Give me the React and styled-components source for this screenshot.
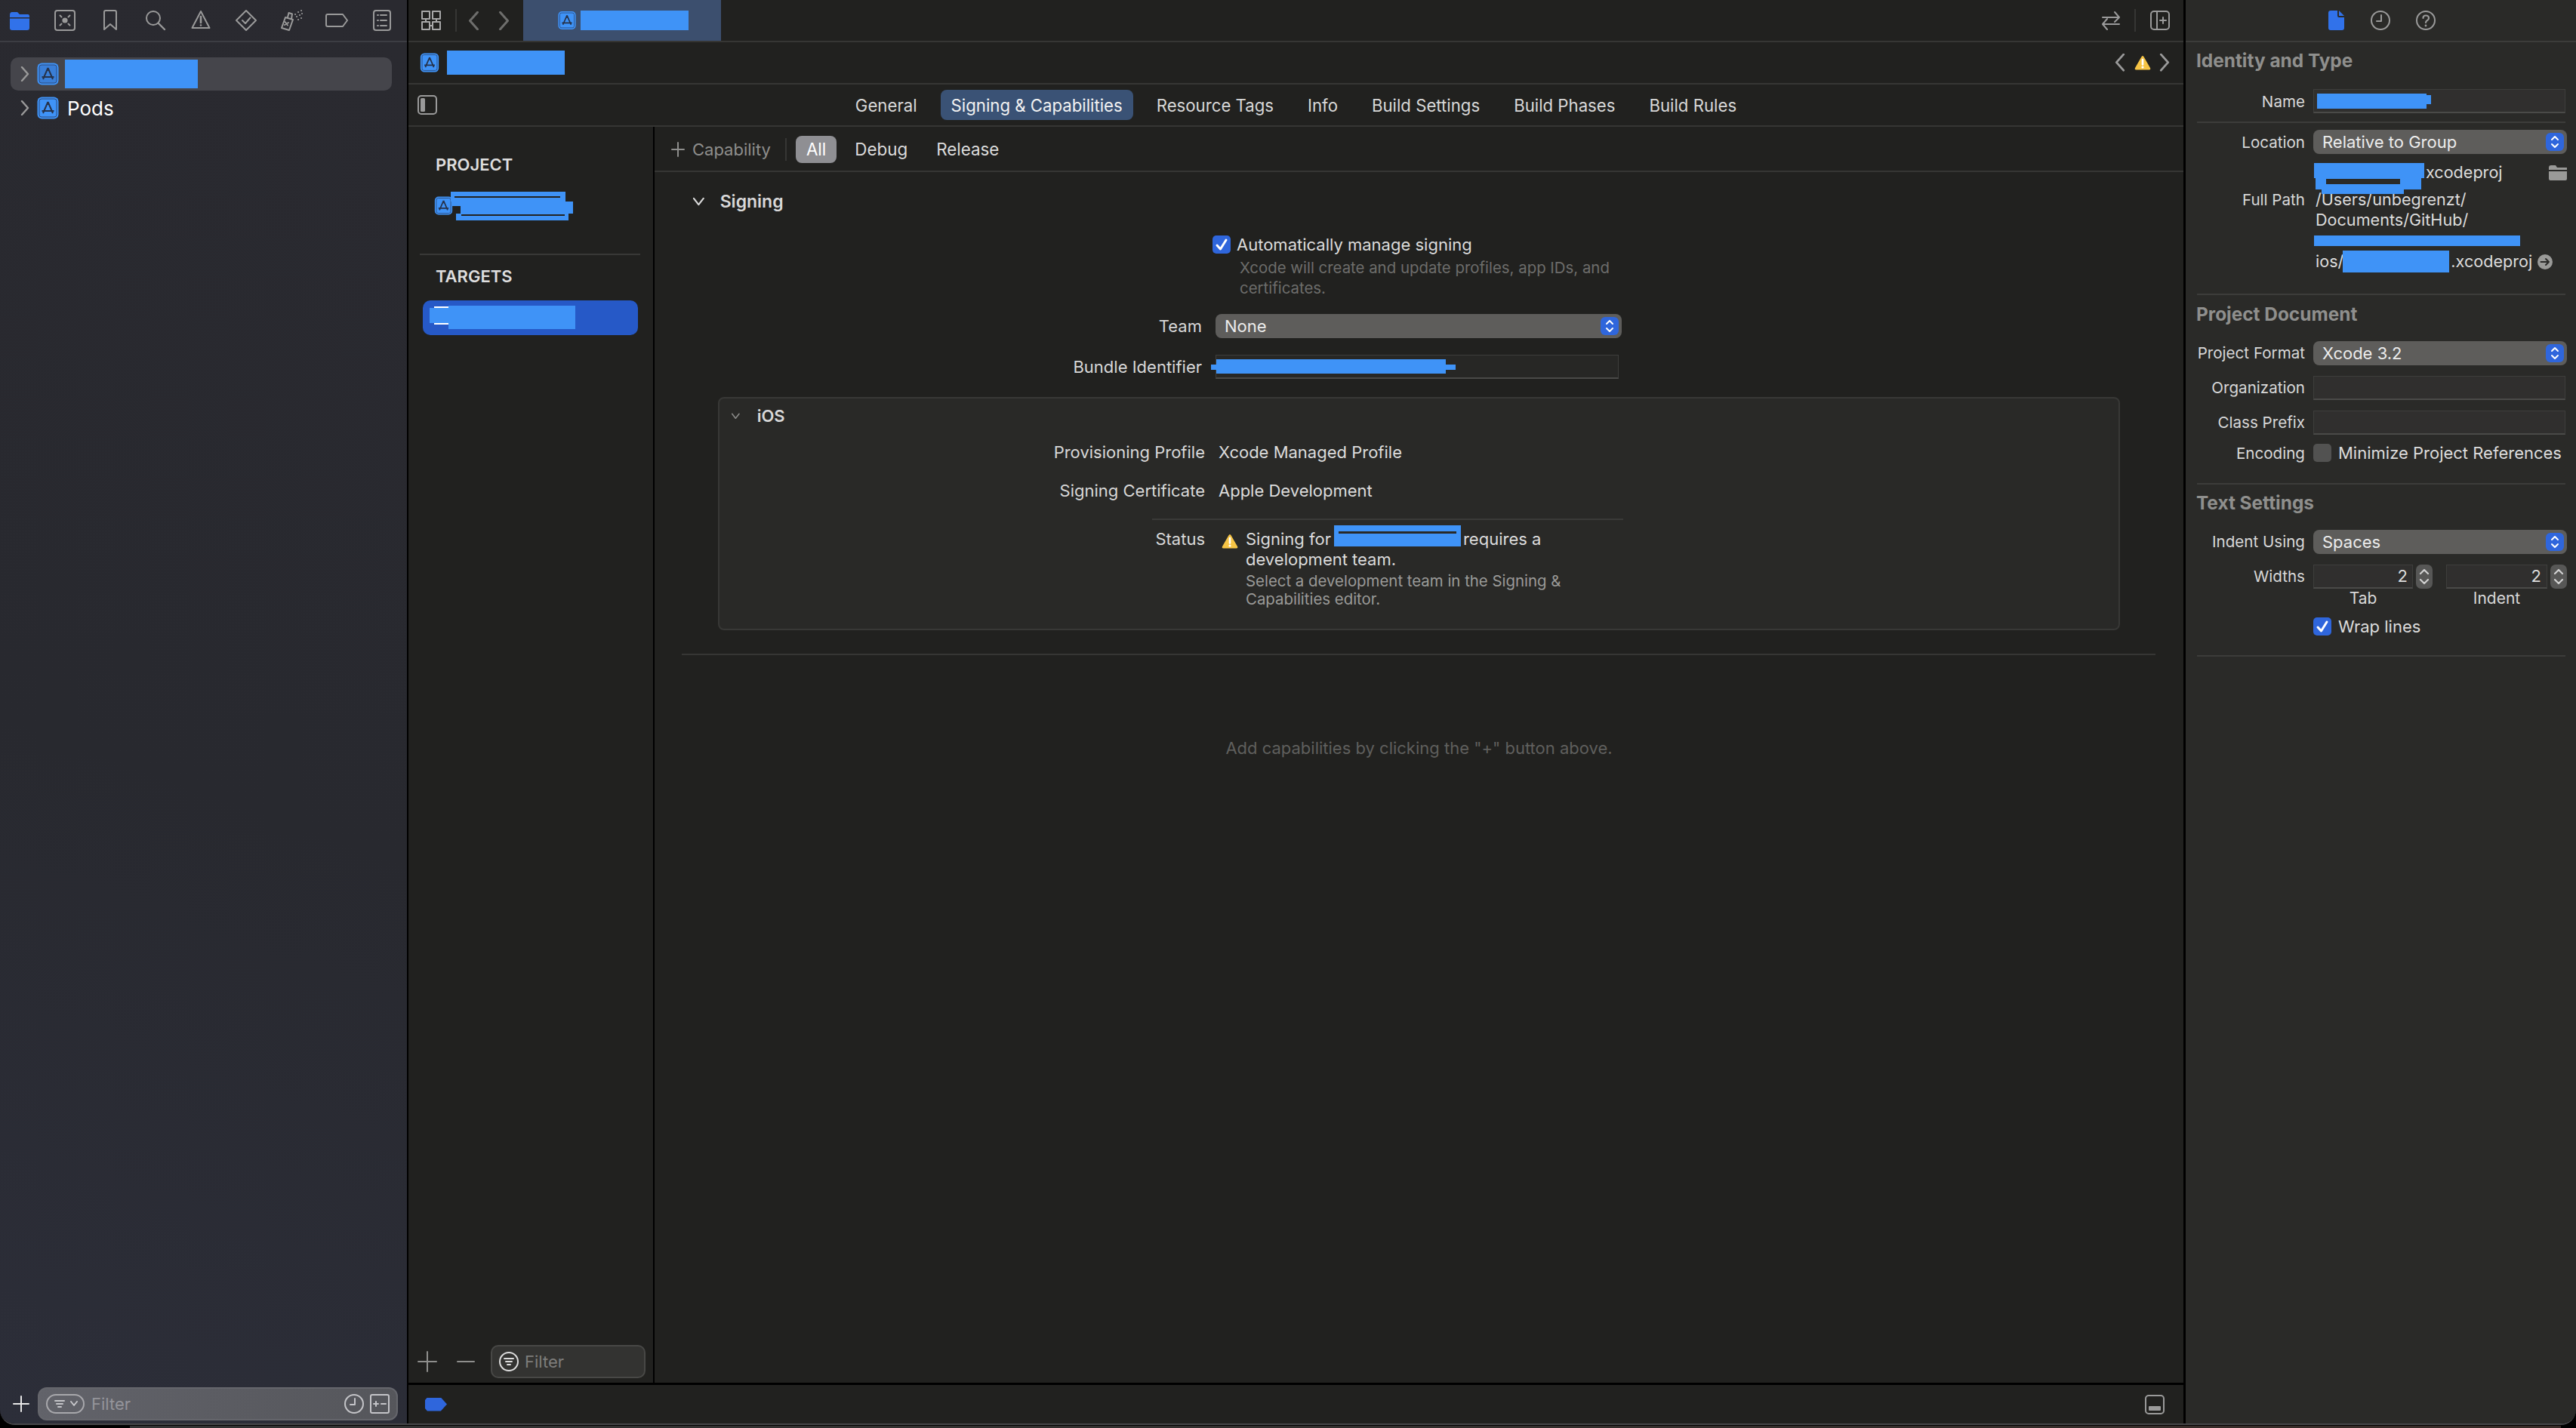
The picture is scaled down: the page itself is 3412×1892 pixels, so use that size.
import React from "react";
import styled, { createGlobalStyle } from "styled-components";

const BLUE = "#3f93f7";
const ACCENT = "#2f66dc";

const Global = createGlobalStyle`
  html, body {
    margin: 0;
    width: 3412px;
    height: 1892px;
    overflow: hidden;
    background: #000;
  }
  body {
    font-family: Inter, "Noto Sans", "Liberation Sans", sans-serif;
    font-size: 22px;
    color: #dcdcdc;
  }
  * { box-sizing: border-box; }
`;

const Window = styled.div`
  display: flex;
  width: 3412px;
  height: 1888px;
  overflow: hidden;
  border-bottom: 2px solid #47474a;
  border-radius: 0 0 20px 20px;
`;

const Wallpaper = styled.div`
  height: 3px;
  margin: 1px 20px 0 172px;
  background: linear-gradient(90deg, #333333, #34302e 50%, #3a2c28);
`;

/* ---------- shared bits ---------- */

const Ico = styled.svg`
  display: block;
  flex: none;
  fill: none;
  stroke: ${(p) => p.$c || "#9a9a9a"};
  stroke-width: ${(p) => p.$sw || 2};
  stroke-linecap: round;
  stroke-linejoin: round;
`;

const Glyph = styled.svg`
  display: block;
  flex: none;
`;

function Icon({ w = 30, h = 30, c, sw, children }) {
  return (
    <Ico width={w} height={h} viewBox={`0 0 ${w} ${h}`} $c={c} $sw={sw}>
      {children}
    </Ico>
  );
}

const Redact = styled.span`
  display: block;
  flex: none;
  width: ${(p) => p.$w}px;
  height: ${(p) => p.$h}px;
  margin-left: ${(p) => p.$ml || 0}px;
  background: ${BLUE};
`;

const Scribble = styled.svg`
  display: block;
  flex: none;
  position: relative;
  overflow: visible;
  margin-left: ${(p) => p.$ml || 0}px;
  rect { fill: ${BLUE}; }
  rect.hole { fill: ${(p) => p.$hole || "#232321"}; }
`;

const Rule = styled.div`
  height: 2px;
  flex: none;
  width: ${(p) => (p.$w ? `${p.$w}px` : "auto")};
  margin: ${(p) => p.$m || "0"};
  background: ${(p) => p.$c || "#383836"};
`;

function AppIcon({ w = 29, h = 30, dim }) {
  return (
    <Glyph width={w} height={h} viewBox="0 0 29 30">
      <rect x="0.5" y="0.5" width="28" height="29" rx="6" fill={BLUE} />
      <rect x="3" y="3" width="23" height="24" rx="3" fill={dim ? "#3a7fd8" : BLUE} stroke="#2c4a7c" strokeWidth="1" />
      <path d="M14.5 7 L8 22 M14.5 7 L21 22 M6.5 19 H22.5 M14.5 7 L14.5 11" stroke="#26324a" strokeWidth="2" fill="none" />
    </Glyph>
  );
}

function Chevron({ dir = "right", c = "#9a9a9a", size = 12 }) {
  const paths = {
    right: "M2 1 L10 10 L2 19",
    left: "M10 1 L2 10 L10 19",
    down: "M1 2 L8 11 L15 2",
  };
  const box = dir === "down" ? [16, 13] : [12, 20];
  return (
    <Ico width={box[0] * (size / 12)} height={box[1] * (size / 12)} viewBox={`0 0 ${box[0]} ${box[1]}`} $c={c} $sw={2.4}>
      <path d={paths[dir]} />
    </Ico>
  );
}

function Warning({ w = 22, h = 20 }) {
  return (
    <Glyph width={w} height={h} viewBox="0 0 22 20">
      <path d="M11 1 Q12 1 13 3 L21 17 Q22 19.5 19.5 19.5 H2.5 Q0 19.5 1 17 L9 3 Q10 1 11 1 Z" fill="#f6c445" />
      <path d="M11 6 V12.5" stroke="#fff" strokeWidth="2.6" strokeLinecap="round" />
      <circle cx="11" cy="16" r="1.6" fill="#fff" />
    </Glyph>
  );
}

const Updown = styled.span`
  display: flex;
  flex: none;
  align-items: center;
  justify-content: center;
  width: ${(p) => p.$w || 24}px;
  height: 24px;
  border-radius: 6px;
  background: ${ACCENT};
`;

function UpdownChip({ w }) {
  return (
    <Updown $w={w}>
      <Icon w={12} h={18} c="#fff" sw={2}>
        <path d="M2 6 L6 2 L10 6 M2 12 L6 16 L10 12" />
      </Icon>
    </Updown>
  );
}

const Check = styled.span`
  display: flex;
  flex: none;
  align-items: center;
  justify-content: center;
  width: 24px;
  height: 24px;
  border-radius: 5px;
  background: ${(p) => (p.$on ? ACCENT : "#525251")};
`;

function CheckMark() {
  return (
    <Check $on>
      <Icon w={18} h={18} c="#fff" sw={3}>
        <path d="M3 10 L7.5 15 L15 3" />
      </Icon>
    </Check>
  );
}

const Spacing = styled.span`
  display: block;
  flex: none;
  width: ${(p) => p.$w}px;
`;

/* ---------- navigator ---------- */

const Sidebar = styled.aside`
  display: flex;
  flex: none;
  flex-direction: column;
  width: 539px;
  background: linear-gradient(200deg, #2a2a30 0%, #28292f 55%, #2c2e39 100%);
`;

const NavTabs = styled.div`
  display: flex;
  flex: none;
  align-items: center;
  gap: 30px;
  height: 56px;
  padding-left: 11px;
  border-bottom: 2px solid #3c3d43;
`;

const Tree = styled.div`
  flex: 1;
  padding-top: 20px;
`;

const TreeRow = styled.div`
  display: flex;
  align-items: center;
  height: 44px;
  margin: 0 20px 1px 14px;
  padding-left: 13px;
  border-radius: 10px;
  background: ${(p) => (p.$selected ? "#45454b" : "transparent")};
  color: #fff;
  font-size: 26px;
`;

const TreeIcon = styled.span`
  display: block;
  flex: none;
  margin: 0 8px 0 10px;
`;

const TreeName = styled.span`
  margin-left: 3px;
`;

const NavFooter = styled.div`
  display: flex;
  flex: none;
  align-items: center;
  height: 44px;
  margin-bottom: 4px;
  padding-left: 17px;
`;

const NavFilter = styled.div`
  display: flex;
  flex: none;
  align-items: center;
  width: 477px;
  height: 44px;
  margin-left: 11px;
  padding: 0 9px 0 9px;
  border: 2px solid #65666c;
  border-radius: 12px;
  background: linear-gradient(100deg, #62636a, #55565b);
`;

const FilterMode = styled.span`
  display: flex;
  flex: none;
  align-items: center;
  justify-content: center;
  gap: 6px;
  width: 51px;
  height: 26px;
  border: 2px solid #a8a8ac;
  border-radius: 13px;
`;

const FilterText = styled.span`
  flex: 1;
  margin-left: 9px;
  color: #94949a;
  font-size: 22px;
`;

/* ---------- editor ---------- */

const Center = styled.main`
  display: flex;
  flex: none;
  flex-direction: column;
  width: 2353px;
  border-left: 2px solid #000;
  background: #21211f;
`;

const Toolbar = styled.div`
  display: flex;
  flex: none;
  align-items: center;
  height: 56px;
  padding-left: 17px;
  border-bottom: 2px solid #363634;
`;

const ToolDivider = styled.span`
  display: block;
  flex: none;
  width: 2px;
  height: 30px;
  margin: ${(p) => p.$m || "0 16px"};
  background: #363634;
`;

const EditorTab = styled.div`
  display: flex;
  flex: none;
  align-items: center;
  gap: 6px;
  width: 262px;
  height: 54px;
  margin-left: 18px;
  padding-left: 46px;
  background: #3c4f6e;
`;

const Spacer = styled.div`
  flex: 1;
`;

const Crumbs = styled.div`
  display: flex;
  flex: none;
  align-items: center;
  height: 56px;
  padding-left: 15px;
  border-bottom: 2px solid #363634;
`;

const TabBar = styled.div`
  display: grid;
  flex: none;
  grid-template-columns: 1fr auto 1fr;
  align-items: center;
  height: 56px;
  border-bottom: 2px solid #363634;
`;

const TabList = styled.div`
  display: flex;
  align-items: center;
  gap: 17px;
`;

const Tab = styled.div`
  display: flex;
  align-items: center;
  height: 40px;
  padding: 0 14px;
  border-radius: 8px;
  background: ${(p) => (p.$active ? "#3a5275" : "transparent")};
  color: ${(p) => (p.$active ? "#f2f2f2" : "#d8d8d8")};
  font-size: 22.2px;
  white-space: nowrap;
`;

const ToggleCell = styled.div`
  padding-left: 12px;
`;

const Content = styled.div`
  display: flex;
  flex: 1;
  min-height: 0;
`;

const ProjectList = styled.section`
  display: flex;
  flex: none;
  flex-direction: column;
  width: 326px;
  border-right: 2px solid #000;
`;

const ListHead = styled.div`
  height: 28px;
  margin-top: ${(p) => p.$mt}px;
  padding-left: 36px;
  color: #dedede;
  font-size: 22px;
  font-weight: 600;
  line-height: 28px;
`;

const ProjectItem = styled.div`
  display: flex;
  align-items: center;
  height: 30px;
  margin-top: 25px;
  padding-left: 34px;
`;

const TargetItem = styled.div`
  display: flex;
  align-items: center;
  height: 46px;
  margin: 18px 20px 0 19px;
  padding-left: 9px;
  border-radius: 10px;
  background: #2659c7;
`;

const ListFooter = styled.div`
  display: flex;
  align-items: center;
  height: 44px;
  margin: auto 0 6px;
  padding-left: 12px;
`;

const ListFilter = styled.div`
  display: flex;
  align-items: center;
  gap: 8px;
  width: 205px;
  height: 44px;
  margin-left: 21px;
  padding-left: 9px;
  border: 2px solid #484846;
  border-radius: 10px;
  background: #333331;
  color: #7d7d7b;
`;

const Detail = styled.section`
  display: flex;
  flex: 1;
  min-width: 0;
  flex-direction: column;
`;

const CapBar = styled.div`
  display: flex;
  flex: none;
  align-items: center;
  height: 60px;
  padding: 1px 0 0 21px;
  border-bottom: 2px solid #363634;
`;

const CapButton = styled.div`
  display: flex;
  align-items: center;
  gap: 9px;
  color: #8e8e8c;
`;

const Segment = styled.div`
  display: flex;
  align-items: center;
  height: 36px;
  margin-left: ${(p) => p.$ml ?? 10}px;
  padding: 0 14px;
  border-radius: 8px;
  background: ${(p) => (p.$on ? "#8f8f93" : "transparent")};
  color: ${(p) => (p.$on ? "#fff" : "#dcdcdc")};
  font-size: 22.4px;
`;

const SectionHead = styled.div`
  display: flex;
  align-items: center;
  gap: ${(p) => p.$gap || 23}px;
  height: 30px;
  margin: ${(p) => p.$m || "0"};
  color: #d8d8d8;
  font-size: ${(p) => p.$fs || 22}px;
  font-weight: 600;
`;

const FormRow = styled.div`
  display: grid;
  grid-template-columns: ${(p) => p.$label || 725}px 1fr;
  column-gap: 18px;
  align-items: ${(p) => p.$align || "center"};
  flex: none;
  min-height: ${(p) => p.$h || 32}px;
  margin-top: ${(p) => p.$mt || 0}px;
`;

const Label = styled.div`
  color: ${(p) => p.$c || "#d8d8d8"};
  line-height: ${(p) => p.$lh || "normal"};
  text-align: right;
  white-space: nowrap;
`;

const CheckRow = styled.div`
  display: flex;
  align-items: center;
  gap: ${(p) => p.$gap || 9}px;
  height: 24px;
  margin: ${(p) => p.$m || "0"};
  color: #dcdcdc;
  font-size: 22px;
`;

const Hint = styled.div`
  color: ${(p) => p.$c || "#6d6d6b"};
  font-size: 20.4px;
  line-height: ${(p) => p.$lh || 27}px;
  margin: ${(p) => p.$m || "0"};
  width: ${(p) => p.$w || 510}px;
`;

const Select = styled.div`
  display: flex;
  align-items: center;
  justify-content: space-between;
  width: ${(p) => p.$w || "100%"};
  height: 32px;
  padding: 0 4px 0 12px;
  border-radius: 8px;
  background: #5e5d5b;
  color: #ececec;
  font-size: 22px;
`;

const Field = styled.div`
  display: flex;
  align-items: center;
  width: ${(p) => p.$w || "100%"};
  height: 32px;
  padding: 0 ${(p) => p.$pr || 0}px 0 ${(p) => p.$pl || 0}px;
  justify-content: ${(p) => (p.$end ? "flex-end" : "flex-start")};
  border: 1px solid #3e3e3c;
  border-bottom: 2px solid #4a4a48;
  background: ${(p) => p.$bg || "#282826"};
`;

const Card = styled.div`
  display: flex;
  flex: none;
  flex-direction: column;
  height: 309px;
  margin: 24px 84px 0 84px;
  padding-top: 8px;
  border: 2px solid #383836;
  border-radius: 8px;
  background: #292927;
`;

const StatusLines = styled.div`
  display: flex;
  align-items: flex-start;
  gap: 10px;
  padding-left: 4px;
`;

const StatusIcon = styled.span`
  display: block;
  flex: none;
  margin-top: 6px;
`;

const StatusText = styled.div`
  line-height: 27px;
`;

const Inline = styled.div`
  display: flex;
  align-items: center;
  gap: ${(p) => p.$gap || 0}px;
  white-space: nowrap;
`;

const EmptyNote = styled.div`
  margin-top: 109px;
  color: #5f5f5d;
  line-height: 28px;
  text-align: center;
`;

const BarLine = styled.div`
  flex: none;
  height: 3px;
  background: #000;
`;

const DebugBar = styled.div`
  display: flex;
  flex: none;
  align-items: center;
  justify-content: space-between;
  height: 51px;
  padding: 0 25px 0 22px;
`;

const Breakpoint = styled.span`
  display: block;
  width: 29px;
  height: 18px;
  background: ${ACCENT};
  clip-path: polygon(10% 0, 72% 0, 100% 50%, 72% 100%, 10% 100%, 0 80%, 0 20%);
`;

/* ---------- inspector ---------- */

const Inspector = styled.aside`
  display: flex;
  flex: 1;
  flex-direction: column;
  border-left: 3px solid #000;
  background: #2a2a28;
`;

const InspectorTabs = styled.div`
  display: flex;
  flex: none;
  align-items: center;
  justify-content: center;
  gap: 34px;
  height: 56px;
  padding-left: 3px;
  border-bottom: 2px solid #3c3c3a;
`;

const InspectorHead = styled.div`
  height: 30px;
  margin: ${(p) => p.$mt}px 0 0 14px;
  color: #8f8f8d;
  font-size: 24.4px;
  font-weight: 700;
  line-height: 30px;
`;

const InspectorRow = styled.div`
  display: grid;
  flex: none;
  grid-template-columns: 158px 1fr;
  column-gap: 11px;
  align-items: ${(p) => p.$align || "center"};
  min-height: ${(p) => p.$h || 32}px;
  margin: ${(p) => p.$mt || 0}px 12px 0 0;
  font-size: 20.6px;
`;

const Steppers = styled.div`
  display: grid;
  grid-template-columns: 132px 22px 148px 22px;
  column-gap: 4px;
  align-items: center;
  font-size: 22px;
  & > :nth-child(3) { margin-left: 14px; width: 134px; }
`;

const Stepper = styled.span`
  display: flex;
  align-items: center;
  justify-content: center;
  width: 22px;
  height: 32px;
  border-radius: 7px;
  background: #575756;
`;

const Captions = styled.div`
  display: flex;
  font-size: 21px;
  line-height: 24px;
  color: #d8d8d8;
`;

const Caption = styled.span`
  width: ${(p) => p.$w}px;
  text-align: center;
`;

const PathBlock = styled.div`
  padding-left: ${(p) => p.$pl ?? 3}px;
  font-size: 21.6px;
  line-height: 27.5px;
  color: #dcdcdc;
`;

const PathLine = styled.div`
  display: flex;
  align-items: center;
  height: 27.5px;
  white-space: nowrap;
`;

const tabs = [
  ["General"],
  ["Signing & Capabilities", true],
  ["Resource Tags"],
  ["Info"],
  ["Build Settings"],
  ["Build Phases"],
  ["Build Rules"],
];

function NavIcons() {
  return (
    <NavTabs>
      <Icon>
        <path d="M2 8 Q2 4 5 4 H12 L15 7 H26 Q28 7 28 10 V11 H2 Z" fill="#3172ea" stroke="none" />
        <path d="M2 12.5 H28 V25 Q28 28 25 28 H5 Q2 28 2 25 Z" fill="#3172ea" stroke="none" />
      </Icon>
      <Icon>
        <rect x="2" y="2" width="26" height="26" rx="3" />
        <circle cx="15" cy="15" r="3.6" fill="#9a9a9a" stroke="none" />
        <path d="M8.5 8.5 L10.5 10.5 M21.5 8.5 L19.5 10.5 M8.5 21.5 L10.5 19.5 M21.5 21.5 L19.5 19.5" />
      </Icon>
      <Icon>
        <path d="M7 4 Q7 2 9 2 H21 Q23 2 23 4 V27 L15 20 L7 27 Z" />
      </Icon>
      <Icon>
        <circle cx="12" cy="12" r="9" />
        <path d="M18.5 18.5 L27 27" strokeWidth="2.4" />
      </Icon>
      <Icon>
        <path d="M15 3 L26.5 25 H3.5 Z" />
        <path d="M15 10 V18" strokeWidth="2.6" />
        <circle cx="15" cy="21.5" r="1.3" fill="#9a9a9a" stroke="none" />
      </Icon>
      <Icon>
        <path d="M15 2 L28 15 L15 28 L2 15 Z" />
        <path d="M10 15 L14 19 L20.5 11.5" />
      </Icon>
      <Icon>
        <path d="M7 11 L17 14 L12 28 L2 25 Z" />
        <path d="M10 11 L11.5 5 L16 6.5 L15 13" />
        <path d="M6.5 17 L10 21.5 M11 18 L6 21" />
        <path d="M20 7 h.1 M24 4 h.1 M28 2 h.1 M22 10 h.1 M26 8 h.1 M29 6 h.1 M24 14 h.1 M28 12 h.1" strokeWidth="2" />
      </Icon>
      <Icon>
        <path d="M1 9 Q1 7 3 7 H23 L29 15 L23 23 H3 Q1 23 1 21 Z" />
      </Icon>
      <Icon>
        <rect x="4" y="2" width="22" height="26" rx="3" />
        <path d="M9 8 H10 M13 8 H21 M9 15 H10 M13 15 H21 M9 22 H10 M13 22 H21" />
      </Icon>
    </NavTabs>
  );
}

function Navigator() {
  return (
    <Sidebar>
      <NavIcons />
      <Tree>
        <TreeRow $selected>
          <Chevron />
          <TreeIcon><AppIcon dim /></TreeIcon>
          <Redact $w={176} $h={38} />
        </TreeRow>
        <TreeRow>
          <Chevron />
          <TreeIcon><AppIcon /></TreeIcon>
          <TreeName>Pods</TreeName>
        </TreeRow>
      </Tree>
      <NavFooter>
        <Icon w={22} h={24} c="#e8e8e8">
          <path d="M11 2 V22 M1 12 H21" />
        </Icon>
        <NavFilter>
          <FilterMode>
            <Icon w={16} h={14} c="#c4c4c8">
              <path d="M2 3 H14 M4 7 H12 M6 11 H10" />
            </Icon>
            <Icon w={10} h={8} c="#c4c4c8">
              <path d="M1 1 L5 6 L9 1" />
            </Icon>
          </FilterMode>
          <FilterText>Filter</FilterText>
          <Icon w={26} h={26} c="#c4c4c8">
            <circle cx="13" cy="13" r="12" />
            <path d="M14 6 V14 H8" />
          </Icon>
          <Spacing $w={8} />
          <Icon w={26} h={26} c="#c4c4c8">
            <rect x="1" y="1" width="24" height="24" rx="2" />
            <path d="M5 13 H11 M8 10 V16 M15 13 H21" />
          </Icon>
        </NavFilter>
      </NavFooter>
    </Sidebar>
  );
}

function EditorToolbar() {
  return (
    <Toolbar>
      <Icon w={26} h={26} c="#a8a8a8">
        <rect x="1" y="1" width="10" height="10" />
        <rect x="15" y="1" width="10" height="10" />
        <rect x="1" y="15" width="10" height="10" />
        <rect x="15" y="15" width="10" height="10" />
        <path d="M6 11 V15 M20 11 V15 M11 20 H15" />
      </Icon>
      <ToolDivider $m="0 0 0 19px" />
      <Spacing $w={15} />
      <Chevron dir="left" c="#6e6e6c" size={15} />
      <Spacing $w={25} />
      <Chevron dir="right" c="#6e6e6c" size={15} />
      <EditorTab>
        <AppIcon w={24} h={26} />
        <Redact $w={143} $h={26} $ml={0} />
      </EditorTab>
      <Spacer />
      <Icon w={26} h={26} c="#9a9a9a">
        <path d="M2 9 H24 M18 2 L24 9 L18 15 M24 18 H2 M8 11 L2 18 L8 25" />
      </Icon>
      <ToolDivider $m="0 19px 0 18px" />
      <Icon w={26} h={26} c="#9a9a9a">
        <rect x="1" y="1" width="24" height="24" rx="4" />
        <path d="M9 1 V25 M13 13 H21 M17 9 V17" />
      </Icon>
      <Spacing $w={18} />
    </Toolbar>
  );
}

function Breadcrumb() {
  return (
    <Crumbs>
      <AppIcon w={26} h={26} />
      <Redact $w={156} $h={32} $ml={10} />
      <Spacer />
      <Chevron dir="left" c="#9a9a9a" size={14} />
      <Spacing $w={12} />
      <Warning />
      <Spacing $w={11} />
      <Chevron dir="right" c="#9a9a9a" size={14} />
      <Spacing $w={18} />
    </Crumbs>
  );
}

function Targets() {
  return (
    <ProjectList>
      <ListHead $mt={36}>PROJECT</ListHead>
      <ProjectItem>
        <AppIcon w={25} h={25} />
        <Scribble width="162" height="30" $ml={-3}>
          <rect x="0" y="-3" width="152" height="13" />
          <rect x="1" y="10" width="15" height="6" />
          <rect x="13" y="10" width="149" height="16" />
          <rect x="7" y="26" width="149" height="9" />
          <rect className="hole" x="5" y="3" width="140" height="2" />
          <rect className="hole" x="14" y="27" width="137" height="2" />
        </Scribble>
      </ProjectItem>
      <Rule $c="#383836" $m="49px 17px 0 15px" />
      <ListHead $mt={14}>TARGETS</ListHead>
      <TargetItem>
        <Scribble width="193" height="46" $hole="#ffffff">
          <rect className="hole" x="6" y="8" width="20" height="24" />
          <rect x="0" y="10" width="25" height="20" />
          <rect x="25" y="7" width="168" height="31" />
        </Scribble>
      </TargetItem>
      <ListFooter>
        <Icon w={26} h={30} c="#8e8e8c">
          <path d="M13 2 V28 M1 15 H25" />
        </Icon>
        <Spacing $w={26} />
        <Icon w={24} h={30} c="#8e8e8c">
          <path d="M1 15 H23" />
        </Icon>
        <ListFilter>
          <Icon w={26} h={26} c="#dcdcdc">
            <circle cx="13" cy="13" r="12" />
            <path d="M7 9 H19 M9 13 H17 M11 17 H15" />
          </Icon>
          Filter
        </ListFilter>
      </ListFooter>
    </ProjectList>
  );
}

function CapabilityToolbar() {
  return (
    <CapBar>
      <CapButton>
        <Icon w={20} h={22} c="#8e8e8c">
          <path d="M10 2 V20 M2 11 H18" />
        </Icon>
        Capability
      </CapButton>
      <ToolDivider $m="0 0 0 19px" />
      <Segment $on $ml={12}>All</Segment>
      <Segment>Debug</Segment>
      <Segment>Release</Segment>
    </CapBar>
  );
}

function SigningForm() {
  return (
    <Detail>
      <CapabilityToolbar />
      <SectionHead $m="24px 0 0 51px" $fs={23} $gap={21}>
        <Chevron dir="down" c="#d8d8d8" size={11} />
        <span>Signing</span>
      </SectionHead>
      <CheckRow $m="30px 0 0 739px" $gap={8}>
        <CheckMark />
        Automatically manage signing
      </CheckRow>
      <Hint $m="5px 0 0 775px">
        Xcode will create and update profiles, app IDs, and certificates.
      </Hint>
      <FormRow $mt={21}>
        <Label>Team</Label>
        <Select $w="538px">
          None
          <UpdownChip />
        </Select>
      </FormRow>
      <FormRow $mt={22}>
        <Label>Bundle Identifier</Label>
        <Field $w="534px" $bg="#272725">
          <Scribble width="317" height="20">
            <rect x="0" y="0" width="304" height="19" />
            <rect x="-7" y="7" width="324" height="7" />
          </Scribble>
        </Field>
      </FormRow>
      <Card>
        <SectionHead $m="0 0 0 16px">
          <Chevron dir="down" c="#8a8a88" size={8} />
          <span>iOS</span>
        </SectionHead>
        <FormRow $label={643} $h={28} $mt={19}>
          <Label>Provisioning Profile</Label>
          <div>Xcode Managed Profile</div>
        </FormRow>
        <FormRow $label={643} $h={28} $mt={23}>
          <Label>Signing Certificate</Label>
          <div>Apple Development</div>
        </FormRow>
        <Rule $c="#3a3a38" $w={624} $m="23px 0 0 573px" />
        <FormRow $label={643} $h={27} $mt={12} $align="start">
          <Label $lh="27px">Status</Label>
          <StatusLines>
            <StatusIcon><Warning w={22} h={20} /></StatusIcon>
            <div>
              <StatusText>
                <Inline>
                  Signing for
                  <Scribble width="168" height="27" $ml={4} $hole="#292927">
                    <rect x="0" y="-5" width="168" height="28" />
                    <rect className="hole" x="6" y="3" width="156" height="3" />
                  </Scribble>
                  <Spacing $w={3} />
                  requires a
                </Inline>
                development team.
              </StatusText>
              <Hint $c="#9a9a98" $lh={24} $m="3px 0 0" $w={440}>
                Select a development team in the Signing &amp; Capabilities editor.
              </Hint>
            </div>
          </StatusLines>
        </FormRow>
      </Card>
      <Rule $c="#363634" $m="31px 37px 0 36px" />
      <EmptyNote>Add capabilities by clicking the "+" button above.</EmptyNote>
    </Detail>
  );
}

function InspectorPanel() {
  return (
    <Inspector>
      <InspectorTabs>
        <Icon w={22} h={26}>
          <path d="M3 0 H12 V7 Q12 9 14 9 H21 V23 Q21 26 18 26 H3 Q0 26 0 23 V3 Q0 0 3 0 Z" fill="#3172ea" stroke="none" />
          <path d="M14 0 L21 7 H14 Z" fill="#3172ea" stroke="none" />
        </Icon>
        <Icon w={26} h={26}>
          <circle cx="13" cy="13" r="12" />
          <path d="M14 6 V14 H8" />
        </Icon>
        <Icon w={26} h={26}>
          <circle cx="13" cy="13" r="12" />
          <path d="M9.5 10 Q9.5 6.5 13 6.5 Q17 6.5 17 10 Q17 12 15 13 Q13 14 13 16" strokeWidth="2.2" />
          <circle cx="13" cy="20" r="1.4" fill="#9a9a9a" stroke="none" />
        </Icon>
      </InspectorTabs>

      <InspectorHead $mt={9}>Identity and Type</InspectorHead>
      <InspectorRow $mt={23}>
        <Label>Name</Label>
        <Field $w="334px" $bg="#302f2e" $pl={4}>
          <Scribble width="151" height="20">
            <rect x="0" y="0" width="145" height="20" />
            <rect x="140" y="2" width="11" height="12" />
          </Scribble>
        </Field>
      </InspectorRow>
      <Rule $c="#3c3c3a" $m="11px 14px 0 15px" />

      <InspectorRow $mt={9}>
        <Label>Location</Label>
        <Select $w="336px">
          Relative to Group
          <UpdownChip />
        </Select>
      </InspectorRow>
      <InspectorRow $mt={11} $h={27}>
        <span />
        <PathBlock $pl={0}>
          <Inline>
            <Scribble width="147" height="27" $ml={1} $hole="#2a2a28">
              <rect x="0" y="1" width="146" height="20" />
              <rect x="2" y="21" width="140" height="15" />
              <rect x="10" y="36" width="109" height="6" />
              <rect className="hole" x="16" y="22" width="98" height="7" />
            </Scribble>
            <Spacing $w={1} />
            xcodeproj
            <Spacer />
            <Icon w={24} h={20} c="none">
              <path d="M0 3 Q0 0 3 0 H9 L11 3 H24 V6 H0 Z M0 8 H24 V18 Q24 20 22 20 H2 Q0 20 0 18 Z" fill="#9a9a98" />
            </Icon>
          </Inline>
        </PathBlock>
      </InspectorRow>
      <InspectorRow $mt={8} $h={110} $align="start">
        <Label $lh="27.5px">Full Path</Label>
        <PathBlock>
          <PathLine>/Users/unbegrenzt/</PathLine>
          <PathLine>Documents/GitHub/</PathLine>
          <PathLine>
            <Redact $w={273} $h={14} $ml={-2} />
          </PathLine>
          <PathLine>
            ios/
            <Redact $w={141} $h={29} $ml={-1} />
            <Spacing $w={2} />
            .xcodeproj
            <Spacing $w={7} />
            <Icon w={20} h={20} c="#2a2a28" sw={2}>
              <circle cx="10" cy="10" r="10" fill="#9a9a98" stroke="none" />
              <path d="M4.5 10 H15 M11 6 L15 10 L11 14" />
            </Icon>
          </PathLine>
        </PathBlock>
      </InspectorRow>
      <Rule $c="#3c3c3a" $m="28px 14px 0 15px" />

      <InspectorHead $mt={10}>Project Document</InspectorHead>
      <InspectorRow $mt={21}>
        <Label>Project Format</Label>
        <Select $w="336px">
          Xcode 3.2
          <UpdownChip />
        </Select>
      </InspectorRow>
      <InspectorRow $mt={14}>
        <Label>Organization</Label>
        <Field $w="334px" $bg="#302f2e" />
      </InspectorRow>
      <InspectorRow $mt={14}>
        <Label>Class Prefix</Label>
        <Field $w="334px" $bg="#302f2e" />
      </InspectorRow>
      <InspectorRow $mt={12} $h={24}>
        <Label>Encoding</Label>
        <CheckRow>
          <Check />
          Minimize Project References
        </CheckRow>
      </InspectorRow>
      <Rule $c="#3c3c3a" $m="27px 14px 0 15px" />

      <InspectorHead $mt={9}>Text Settings</InspectorHead>
      <InspectorRow $mt={21}>
        <Label>Indent Using</Label>
        <Select $w="336px">
          Spaces
          <UpdownChip />
        </Select>
      </InspectorRow>
      <InspectorRow $mt={14}>
        <Label>Widths</Label>
        <Steppers>
          <Field $bg="#302f2e" $end $pr={6}>2</Field>
          <Stepper>
            <Icon w={14} h={24} c="#d0d0d0" sw={2.2}>
              <path d="M2 8 L7 3 L12 8 M2 16 L7 21 L12 16" />
            </Icon>
          </Stepper>
          <Field $bg="#302f2e" $end $pr={7}>2</Field>
          <Stepper>
            <Icon w={14} h={24} c="#d0d0d0" sw={2.2}>
              <path d="M2 8 L7 3 L12 8 M2 16 L7 21 L12 16" />
            </Icon>
          </Stepper>
        </Steppers>
      </InspectorRow>
      <InspectorRow $mt={1} $h={24}>
        <span />
        <Captions>
          <Caption $w={132}>Tab</Caption>
          <Spacing $w={44} />
          <Caption $w={134}>Indent</Caption>
        </Captions>
      </InspectorRow>
      <InspectorRow $mt={13} $h={24}>
        <span />
        <CheckRow>
          <CheckMark />
          Wrap lines
        </CheckRow>
      </InspectorRow>
      <Rule $c="#3c3c3a" $m="26px 14px 0 15px" />
    </Inspector>
  );
}

export default function App() {
  return (
    <>
      <Global />
      <Window>
        <Navigator />
        <Center>
          <EditorToolbar />
          <Breadcrumb />
          <TabBar>
            <ToggleCell>
              <Icon w={26} h={26} c="#9a9a9a">
                <rect x="1" y="1" width="24" height="24" rx="4" />
                <rect x="4" y="4" width="6" height="18" rx="1.5" fill="#9a9a9a" stroke="none" />
              </Icon>
            </ToggleCell>
            <TabList>
              {tabs.map(([name, active]) => (
                <Tab key={name} $active={active}>{name}</Tab>
              ))}
            </TabList>
            <span />
          </TabBar>
          <Content>
            <Targets />
            <SigningForm />
          </Content>
          <BarLine />
          <DebugBar>
            <Breakpoint />
            <Icon w={26} h={26} c="#9a9a9a">
              <rect x="1" y="1" width="24" height="24" rx="4" />
              <rect x="5" y="15" width="16" height="6" rx="1" fill="#9a9a9a" stroke="none" />
            </Icon>
          </DebugBar>
        </Center>
        <InspectorPanel />
      </Window>
      <Wallpaper />
    </>
  );
}
